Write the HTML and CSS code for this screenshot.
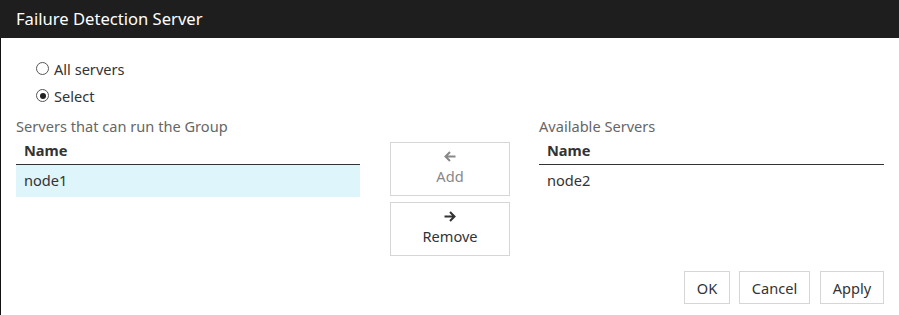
FILE: index.html
```html
<!DOCTYPE html>
<html>
<head>
<meta charset="utf-8">
<link rel="stylesheet" href="styles.css">
</head>
<body>
<div class="dialog">
  <div class="header">Failure Detection Server</div>
  <div class="body">
    <div class="radios">
      <label class="radio"><span class="dot"></span>All servers</label>
      <label class="radio"><span class="dot checked"></span>Select</label>
    </div>
    <div class="columns">
      <div class="col">
        <div class="caption">Servers that can run the Group</div>
        <div class="thead">Name</div>
        <div class="trow selected">node1</div>
      </div>
      <div class="mid">
        <button class="move disabled">
          <svg width="12" height="11" viewBox="0 0 12 11"><path d="M11.5 5.5H1.5M6 1L1.5 5.5 6 10" fill="none" stroke="currentColor" stroke-width="2"/></svg>
          <span>Add</span>
        </button>
        <button class="move">
          <svg width="12" height="11" viewBox="0 0 12 11"><path d="M0.5 5.5h10M6 1l4.5 4.5L6 10" fill="none" stroke="currentColor" stroke-width="2"/></svg>
          <span>Remove</span>
        </button>
      </div>
      <div class="col">
        <div class="caption">Available Servers</div>
        <div class="thead">Name</div>
        <div class="trow">node2</div>
      </div>
    </div>
    <div class="footer">
      <button class="btn ok">OK</button>
      <button class="btn cancel">Cancel</button>
      <button class="btn apply">Apply</button>
    </div>
  </div>
</div>
</body>
</html>
```
FILE: styles.css
```css
html, body {
  margin: 0;
  padding: 0;
  background: #fff;
}
body {
  width: 899px;
  height: 315px;
  overflow: hidden;
  font-family: "Noto Sans", "Liberation Sans", sans-serif;
  font-size: 14.6px;
  color: #333;
}
.dialog {
  display: flex;
  flex-direction: column;
  height: 315px;
}
.header {
  height: 38px;
  background: #1e1e1e;
  color: #fff;
  font-size: 16.6px;
  line-height: 37px;
  padding-left: 16px;
}
.body {
  flex: 1;
  border-left: 1px solid #111;
  padding: 0 15px 0 15px;
}
.radios {
  padding-top: 18px;
  padding-left: 20px;
}
.radio {
  display: flex;
  align-items: center;
  height: 27px;
  gap: 5px;
  box-sizing: border-box;
  padding-bottom: 2px;
}
.dot {
  width: 11px;
  height: 11px;
  border: 1px solid #555;
  border-radius: 50%;
  position: relative;
  background: #fff;
}
.dot.checked::after {
  content: "";
  position: absolute;
  left: 2.5px;
  top: 2.5px;
  width: 6px;
  height: 6px;
  border-radius: 50%;
  background: #222;
}
.columns {
  display: grid;
  grid-template-columns: 344px 120px 1fr;
  column-gap: 30px;
  margin-top: 8px;
}
.columns > .col:last-child {
  margin-left: -1px;
}
.caption {
  height: 18px;
  line-height: 16px;
  color: #666;
}
.thead {
  height: 26px;
  line-height: 24px;
  padding-left: 8px;
  font-weight: bold;
  border-bottom: 1px solid #333;
  margin-top: 2px;
}
.trow {
  height: 32px;
  line-height: 30px;
  padding-left: 8px;
}
.trow.selected {
  background: #def5fc;
}
.mid {
  padding-top: 24px;
  display: flex;
  flex-direction: column;
  gap: 6px;
}
.move {
  height: 54px;
  background: #fff;
  border: 1px solid #d6d6d6;
  font-family: inherit;
  font-size: 14.6px;
  color: #333;
  display: flex;
  flex-direction: column;
  align-items: center;
  justify-content: center;
  gap: 4px;
  padding: 0 0 1px 0;
}
.move svg {
  display: block;
}
.move.disabled {
  color: #888;
}
.footer {
  display: flex;
  justify-content: flex-end;
  gap: 9px;
  margin-top: 15px;
}
.btn {
  height: 33px;
  background: #fff;
  border: 1px solid #d6d6d6;
  font-family: inherit;
  font-size: 14.6px;
  color: #333;
  padding: 0;
}
.btn.ok { width: 46px; }
.btn.cancel { width: 71px; }
.btn.apply { width: 64px; margin-left: 1px; }
```
